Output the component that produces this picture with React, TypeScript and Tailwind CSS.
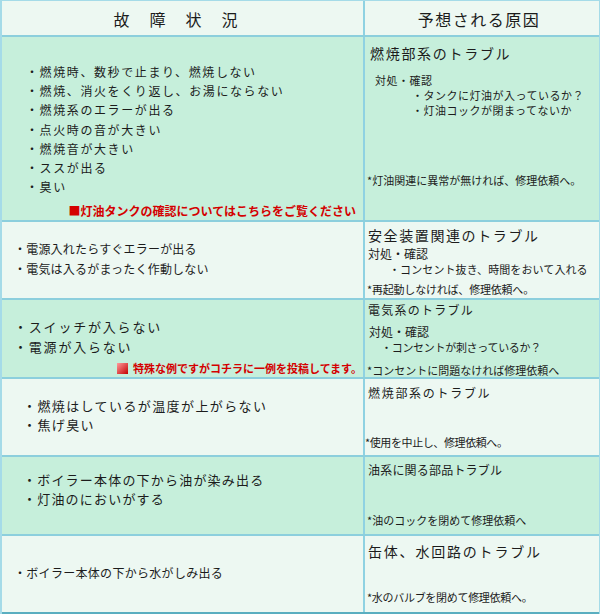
import React from 'react';

// 故障状況と予想される原因の一覧表

export default function App() {
  return (
    <div className="w-[600px] h-[614px] bg-white font-['Noto_Sans_CJK_JP','Noto_Sans',sans-serif] text-[#1c1c1c]">
      <div className="flex flex-col border-t border-l-2 border-r border-[#a5dbe8]">
        {/* ヘッダー */}
        <div className="grid grid-cols-[363px_1fr] h-[36px] bg-[#edf8f2] border-b-2 border-[#8ccfdd]">
          <div className="flex items-center justify-center gap-[20px] pt-[2px] pr-[14px] border-r-2 border-[#8fd2e2] text-[16px] leading-none">
            <span>故</span>
            <span>障</span>
            <span>状</span>
            <span>況</span>
          </div>
          <div className="flex items-center justify-center pt-[2px] pr-[6px] text-[16px] tracking-[1.5px] leading-none">
            予想される原因
          </div>
        </div>

        {/* 燃焼部系 */}
        <div className="grid grid-cols-[363px_1fr] h-[185px] bg-[#c6efdb] border-b-2 border-[#8ccfdd]">
          <div className="flex flex-col pt-[25px] pl-[24px] pr-[7px] border-r-2 border-[#8fd2e2]">
            <div className="text-[12px] tracking-[1.6px] leading-[19.2px]">
              <p>・燃焼時、数秒で止まり、燃焼しない</p>
              <p>・燃焼、消火をくり返し、お湯にならない</p>
              <p>・燃焼系のエラーが出る</p>
              <p>・点火時の音が大きい</p>
              <p>・燃焼音が大きい</p>
              <p>・ススが出る</p>
              <p>・臭い</p>
            </div>
            <p className="mt-[7px] self-end text-[12px] font-bold leading-[16px] text-[#d40000]">
              ■灯油タンクの確認についてはこちらをご覧ください
            </p>
          </div>
          <div className="flex flex-col pt-[7px]">
            <p className="pl-[5px] text-[14px] tracking-[1.7px] leading-[18px]">燃焼部系のトラブル</p>
            <p className="mt-[12px] pl-[10px] text-[11px] tracking-[0.5px] leading-[13px]">対処・確認</p>
            <p className="mt-[1px] pl-[47px] text-[11px] tracking-[0.5px] leading-[14px]">・タンクに灯油が入っているか？</p>
            <p className="mt-[1px] pl-[47px] text-[11px] tracking-[0.5px] leading-[14px]">・灯油コックが閉まってないか</p>
            <p className="mt-[56px] pl-[2px] text-[11px] leading-[14px]">*灯油関連に異常が無ければ、修理依頼へ。</p>
          </div>
        </div>

        {/* 安全装置関連 */}
        <div className="grid grid-cols-[363px_1fr] h-[78px] bg-[#edf8f2] border-b-2 border-[#8ccfdd]">
          <div className="flex flex-col pt-[17px] pl-[12px] border-r-2 border-[#8fd2e2] text-[12px] tracking-[0.2px] leading-[20px]">
            <p>・電源入れたらすぐエラーが出る</p>
            <p>・電気は入るがまったく作動しない</p>
          </div>
          <div className="flex flex-col pt-[4px]">
            <p className="pl-[3px] text-[14px] tracking-[1.6px] leading-[18px]">安全装置関連のトラブル</p>
            <p className="mt-[3px] pl-[3px] text-[12px] leading-[14px]">対処・確認</p>
            <p className="mt-[1px] pl-[24px] text-[11px] tracking-[0.1px] leading-[14px]">・コンセント抜き、時間をおいて入れる</p>
            <p className="mt-[6px] pl-[2px] text-[11px] tracking-[-0.2px] leading-[14px]">*再起動しなければ、修理依頼へ。</p>
          </div>
        </div>

        {/* 電気系 */}
        <div className="grid grid-cols-[363px_1fr] h-[79px] bg-[#c6efdb] border-b-2 border-[#8ccfdd]">
          <div className="flex flex-col pt-[17px] pl-[12px] pr-[1px] border-r-2 border-[#8fd2e2]">
            <div className="text-[13px] tracking-[1.8px] leading-[20px]">
              <p>・スイッチが入らない</p>
              <p>・電源が入らない</p>
            </div>
            <p className="mt-[3px] self-end flex items-center gap-[5px] text-[11px] font-bold leading-[16px] text-[#d40000]">
              <span className="inline-block w-[11px] h-[11px] bg-[linear-gradient(135deg,#ff9c9c,#c40000)]" />
              <span>特殊な例ですがコチラに一例を投稿してます。</span>
            </p>
          </div>
          <div className="flex flex-col pt-[2px]">
            <p className="pl-[3px] text-[12px] tracking-[1.25px] leading-[16px]">電気系のトラブル</p>
            <p className="mt-[7px] pl-[4px] text-[12px] leading-[14px]">対処・確認</p>
            <p className="mt-[1px] pl-[16px] text-[11px] tracking-[-0.3px] leading-[14px]">・コンセントが刺さっているか？</p>
            <p className="mt-[9px] pl-[2px] text-[11px] leading-[14px]">*コンセントに問題なければ修理依頼へ</p>
          </div>
        </div>

        {/* 燃焼部系（温度） */}
        <div className="grid grid-cols-[363px_1fr] h-[78px] bg-[#edf8f2] border-b-2 border-[#8ccfdd]">
          <div className="flex flex-col pt-[17px] pl-[21px] border-r-2 border-[#8fd2e2] text-[13px] tracking-[1.4px] leading-[19px]">
            <p>・燃焼はしているが温度が上がらない</p>
            <p>・焦げ臭い</p>
          </div>
          <div className="flex flex-col pt-[6px]">
            <p className="pl-[3px] text-[12px] tracking-[1.7px] leading-[16px]">燃焼部系のトラブル</p>
            <p className="mt-[34px] text-[11px] tracking-[-0.4px] leading-[14px]">*使用を中止し、修理依頼へ。</p>
          </div>
        </div>

        {/* 油系 */}
        <div className="grid grid-cols-[363px_1fr] h-[79px] bg-[#c6efdb] border-b-2 border-[#8ccfdd]">
          <div className="flex flex-col pt-[13px] pl-[21px] border-r-2 border-[#8fd2e2] text-[13px] tracking-[1.2px] leading-[19px]">
            <p>・ボイラー本体の下から油が染み出る</p>
            <p>・灯油のにおいがする</p>
          </div>
          <div className="flex flex-col pt-[5px]">
            <p className="pl-[3px] text-[12px] tracking-[0.2px] leading-[16px]">油系に関る部品トラブル</p>
            <p className="mt-[35px] pl-[2px] text-[11px] leading-[14px]">*油のコックを閉めて修理依頼へ</p>
          </div>
        </div>

        {/* 缶体・水回路 */}
        <div className="grid grid-cols-[363px_1fr] h-[78px] bg-[#edf8f2] border-b-2 border-[#5aaec0]">
          <div className="flex flex-col pt-[29px] pl-[12px] border-r-2 border-[#8fd2e2] text-[12px] tracking-[0.3px] leading-[16px]">
            <p>・ボイラー本体の下から水がしみ出る</p>
          </div>
          <div className="flex flex-col pt-[6px]">
            <p className="pl-[3px] text-[14px] tracking-[1.8px] leading-[18px]">缶体、水回路のトラブル</p>
            <p className="mt-[30px] pl-[2px] text-[11px] tracking-[-0.3px] leading-[14px]">*水のバルブを閉めて修理依頼へ。</p>
          </div>
        </div>
      </div>
    </div>
  );
}
